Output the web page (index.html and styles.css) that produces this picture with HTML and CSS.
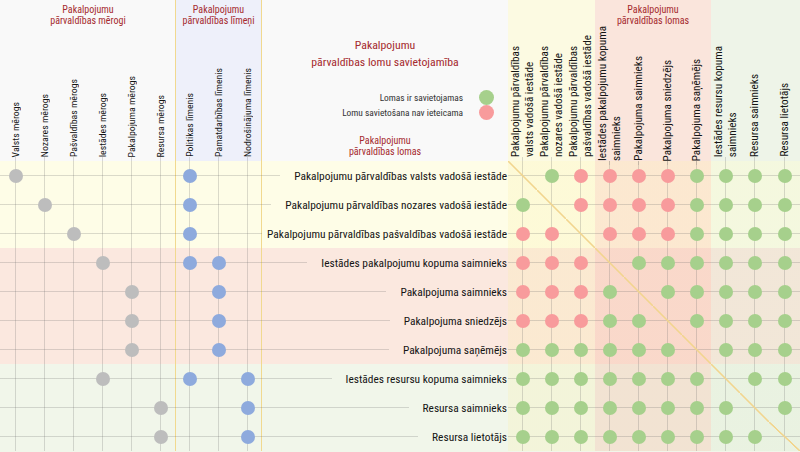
FILE: index.html
```html
<!DOCTYPE html>
<html>
<head>
	<meta charset="utf-8">
	<title>Pakalpojumu pārvaldības lomu savietojamība</title>
	<link rel="stylesheet" href="styles.css">
</head>
<body>
	<!-- header: column titles -->
	<div class="head">
		<div class="grp scales">
			<div class="gt">Pakalpojumu<br>pārvaldības mērogi</div>
			<div class="hl">
				<div class="hc"><span class="vl">Valsts mērogs</span></div>
				<div class="hc"><span class="vl">Nozares mērogs</span></div>
				<div class="hc"><span class="vl">Pašvaldības mērogs</span></div>
				<div class="hc"><span class="vl">Iestādes mērogs</span></div>
				<div class="hc"><span class="vl">Pakalpojuma mērogs</span></div>
				<div class="hc"><span class="vl">Resursa mērogs</span></div>
			</div>
		</div>
		<div class="grp levels">
			<div class="gt">Pakalpojumu<br>pārvaldības līmeņi</div>
			<div class="hl">
				<div class="hc"><span class="vl">Politikas līmenis</span></div>
				<div class="hc"><span class="vl">Pamatdarbības līmenis</span></div>
				<div class="hc"><span class="vl">Nodrošinājuma līmenis</span></div>
			</div>
		</div>
		<div class="mid">
			<div class="title">Pakalpojumu<br>pārvaldības lomu savietojamība</div>
			<div class="legend">
				<div class="li ok">Lomas ir savietojamas</div>
				<div class="li no">Lomu savietošana nav ieteicama</div>
			</div>
			<div class="sub">Pakalpojumu<br>pārvaldības lomas</div>
		</div>
		<div class="grp ry">
			<div class="hl">
				<div class="hc"><span class="vl">Pakalpojumu pārvaldības<br>valsts vadošā iestāde</span></div>
				<div class="hc"><span class="vl">Pakalpojumu pārvaldības<br>nozares vadošā iestāde</span></div>
				<div class="hc"><span class="vl">Pakalpojumu pārvaldības<br>pašvaldības vadošā iestāde</span></div>
			</div>
		</div>
		<div class="grp rp">
			<div class="gt">Pakalpojumu<br>pārvaldības lomas</div>
			<div class="hl">
				<div class="hc"><span class="vl">Iestādes pakalpojumu kopuma<br>saimnieks</span></div>
				<div class="hc"><span class="vl">Pakalpojuma saimnieks</span></div>
				<div class="hc"><span class="vl">Pakalpojuma sniedzējs</span></div>
				<div class="hc"><span class="vl">Pakalpojuma saņēmējs</span></div>
			</div>
		</div>
		<div class="grp rg">
			<div class="hl">
				<div class="hc"><span class="vl">Iestādes resursu kopuma<br>saimnieks</span></div>
				<div class="hc"><span class="vl">Resursa saimnieks</span></div>
				<div class="hc"><span class="vl">Resursa lietotājs</span></div>
			</div>
		</div>
	</div>

	<!-- rows: 9 left cells, label, 10 matrix cells -->
	<div class="band yellow">
		<div class="row">
			<span class="c gy"></span><span class="c"></span><span class="c"></span><span class="c"></span><span class="c"></span><span class="c"></span>
			<span class="c bl"></span><span class="c"></span><span class="c"></span>
			<span class="lbl">Pakalpojumu pārvaldības valsts vadošā iestāde</span>
			<span class="c d"></span><span class="c ok"></span><span class="c no"></span><span class="c no"></span><span class="c no"></span><span class="c no"></span><span class="c ok"></span><span class="c ok"></span><span class="c ok"></span><span class="c ok"></span>
		</div>
		<div class="row">
			<span class="c"></span><span class="c gy"></span><span class="c"></span><span class="c"></span><span class="c"></span><span class="c"></span>
			<span class="c bl"></span><span class="c"></span><span class="c"></span>
			<span class="lbl">Pakalpojumu pārvaldības nozares vadošā iestāde</span>
			<span class="c ok"></span><span class="c d"></span><span class="c no"></span><span class="c no"></span><span class="c no"></span><span class="c no"></span><span class="c ok"></span><span class="c ok"></span><span class="c ok"></span><span class="c ok"></span>
		</div>
		<div class="row">
			<span class="c"></span><span class="c"></span><span class="c gy"></span><span class="c"></span><span class="c"></span><span class="c"></span>
			<span class="c bl"></span><span class="c"></span><span class="c"></span>
			<span class="lbl">Pakalpojumu pārvaldības pašvaldības vadošā iestāde</span>
			<span class="c no"></span><span class="c no"></span><span class="c d"></span><span class="c no"></span><span class="c no"></span><span class="c no"></span><span class="c ok"></span><span class="c ok"></span><span class="c ok"></span><span class="c ok"></span>
		</div>
	</div>
	<div class="band pink">
		<div class="row">
			<span class="c"></span><span class="c"></span><span class="c"></span><span class="c gy"></span><span class="c"></span><span class="c"></span>
			<span class="c bl"></span><span class="c bl"></span><span class="c"></span>
			<span class="lbl">Iestādes pakalpojumu kopuma saimnieks</span>
			<span class="c no"></span><span class="c no"></span><span class="c no"></span><span class="c d"></span><span class="c ok"></span><span class="c ok"></span><span class="c ok"></span><span class="c ok"></span><span class="c ok"></span><span class="c ok"></span>
		</div>
		<div class="row">
			<span class="c"></span><span class="c"></span><span class="c"></span><span class="c"></span><span class="c gy"></span><span class="c"></span>
			<span class="c"></span><span class="c bl"></span><span class="c"></span>
			<span class="lbl">Pakalpojuma saimnieks</span>
			<span class="c no"></span><span class="c no"></span><span class="c no"></span><span class="c ok"></span><span class="c d"></span><span class="c ok"></span><span class="c ok"></span><span class="c ok"></span><span class="c ok"></span><span class="c ok"></span>
		</div>
		<div class="row">
			<span class="c"></span><span class="c"></span><span class="c"></span><span class="c"></span><span class="c gy"></span><span class="c"></span>
			<span class="c"></span><span class="c bl"></span><span class="c"></span>
			<span class="lbl">Pakalpojuma sniedzējs</span>
			<span class="c no"></span><span class="c no"></span><span class="c no"></span><span class="c ok"></span><span class="c ok"></span><span class="c d"></span><span class="c ok"></span><span class="c ok"></span><span class="c ok"></span><span class="c ok"></span>
		</div>
		<div class="row">
			<span class="c"></span><span class="c"></span><span class="c"></span><span class="c"></span><span class="c gy"></span><span class="c"></span>
			<span class="c"></span><span class="c bl"></span><span class="c"></span>
			<span class="lbl">Pakalpojuma saņēmējs</span>
			<span class="c ok"></span><span class="c ok"></span><span class="c ok"></span><span class="c ok"></span><span class="c ok"></span><span class="c ok"></span><span class="c d"></span><span class="c ok"></span><span class="c ok"></span><span class="c ok"></span>
		</div>
	</div>
	<div class="band green">
		<div class="row">
			<span class="c"></span><span class="c"></span><span class="c"></span><span class="c gy"></span><span class="c"></span><span class="c"></span>
			<span class="c bl"></span><span class="c"></span><span class="c bl"></span>
			<span class="lbl">Iestādes resursu kopuma saimnieks</span>
			<span class="c ok"></span><span class="c ok"></span><span class="c ok"></span><span class="c ok"></span><span class="c ok"></span><span class="c ok"></span><span class="c ok"></span><span class="c d"></span><span class="c ok"></span><span class="c ok"></span>
		</div>
		<div class="row">
			<span class="c"></span><span class="c"></span><span class="c"></span><span class="c"></span><span class="c"></span><span class="c gy"></span>
			<span class="c"></span><span class="c"></span><span class="c bl"></span>
			<span class="lbl">Resursa saimnieks</span>
			<span class="c ok"></span><span class="c ok"></span><span class="c ok"></span><span class="c ok"></span><span class="c ok"></span><span class="c ok"></span><span class="c ok"></span><span class="c ok"></span><span class="c d"></span><span class="c ok"></span>
		</div>
		<div class="row">
			<span class="c"></span><span class="c"></span><span class="c"></span><span class="c"></span><span class="c"></span><span class="c gy"></span>
			<span class="c"></span><span class="c"></span><span class="c bl"></span>
			<span class="lbl">Resursa lietotājs</span>
			<span class="c ok"></span><span class="c ok"></span><span class="c ok"></span><span class="c ok"></span><span class="c ok"></span><span class="c ok"></span><span class="c ok"></span><span class="c ok"></span><span class="c ok"></span><span class="c d"></span>
		</div>
	</div>
</body>
</html>
```

FILE: styles.css
```css
:root{
	--line: rgba(100, 100, 100, 0.23);
	--edge-col: #f1d98f;
	--red: #a52a2e;
}
*{
	box-sizing: border-box;
}
body{
	margin: 0;
	width: 800px;
	height: 452px;
	overflow: hidden;
	font-family: Roboto, "Liberation Sans", sans-serif;
	font-stretch: 75%;
	font-weight: 380;
	color: #141414;
	background: #f1f6ea;
}

/* header */
.head{
	display: flex;
	height: 161px;
	padding-left: 1px;
	background: #f9f9f9;
}
.grp{
	display: flex;
	flex-direction: column;
}
.scales{
	width: 174px;
}
.levels{
	width: 87px;
	background: #eef0fa;
	box-shadow: inset 1px 0 var(--edge-col), inset -1px 0 var(--edge-col);
}
.ry{
	width: 87px;
	background: #fcfae2;
}
.rp{
	width: 116px;
	background: #fae5dc;
}
.rg{
	flex: 1;
	background: #eef4e8;
}
.gt{
	padding-top: 5px;
	font-size: 10px;
	line-height: 10.5px;
	color: var(--red);
	text-align: center;
}
.hl{
	flex: 1;
	display: flex;
	align-items: flex-end;
}
.hc{
	width: 29px;
	display: flex;
	justify-content: center;
	padding-bottom: 4px;
	background: linear-gradient(var(--line), var(--line)) center bottom / 1px 4px no-repeat;
}
.rg .hc:last-child{
	flex: 1;
}
.vl{
	writing-mode: vertical-rl;
	transform: rotate(180deg);
	white-space: nowrap;
	font-size: 9.8px;
	line-height: 12px;
}
.ry .vl, .rp .vl, .rg .vl{
	font-size: 11.2px;
	line-height: 14px;
}

/* middle of header: title and legend */
.mid{
	width: 246px;
	display: flex;
	flex-direction: column;
	align-items: center;
	padding-top: 37px;
}
.title{
	font-size: 11.8px;
	line-height: 17px;
	color: var(--red);
	text-align: center;
}
.legend{
	align-self: stretch;
	margin-top: 19px;
	padding-right: 14px;
}
.li{
	display: flex;
	justify-content: flex-end;
	align-items: center;
	gap: 16px;
	height: 15px;
	font-size: 9.4px;
	color: #333;
}
.li::after{
	content: '';
	width: 15px;
	height: 15px;
	border-radius: 50%;
}
.sub{
	margin-top: auto;
	margin-bottom: 4px;
	font-size: 10px;
	line-height: 11px;
	color: var(--red);
	text-align: center;
}

/* rows */
.band.yellow{
	background: #fefde7;
}
.band.pink{
	background: #fbe8df;
}
.band.green{
	background: #f1f6ea;
}
.row{
	display: grid;
	grid-template-columns: repeat(9, 29px) 246px repeat(9, 29px) 1fr;
	height: 29px;
	padding-left: 1px;
	background: linear-gradient(var(--line), var(--line)) left center / 1px 1px no-repeat;
}
.c{
	--diag: none;
	--edge: none;
	--tint: transparent;
	display: grid;
	place-items: center;
	background:
		var(--diag),
		linear-gradient(var(--line), var(--line)) center / 1px 100% no-repeat,
		linear-gradient(var(--line), var(--line)) center / 100% 1px no-repeat,
		var(--edge),
		linear-gradient(var(--tint), var(--tint));
}
.row > :nth-child(7){
	--edge: linear-gradient(var(--edge-col), var(--edge-col)) left / 1px 100% no-repeat;
}
.row > :nth-child(9){
	--edge: linear-gradient(var(--edge-col), var(--edge-col)) right / 1px 100% no-repeat;
}
.row > :nth-child(n+11):nth-child(-n+13){
	--tint: rgba(250, 238, 160, 0.22);
}
.row > :nth-child(n+14):nth-child(-n+17){
	--tint: rgba(245, 170, 140, 0.25);
}
.row > :nth-child(n+18){
	--tint: rgba(200, 225, 185, 0.18);
}
.c.d{
	--diag: linear-gradient(to top right, transparent calc(50% - 1px), #f2d58e calc(50% - 0.5px), #f2d58e calc(50% + 0.5px), transparent calc(50% + 1px));
}
.gy::after, .bl::after, .c.ok::after, .c.no::after{
	content: '';
	width: 14px;
	height: 14px;
	border-radius: 50%;
}
.gy::after{
	background: #bdbdbd;
}
.bl::after{
	background: #8eaadd;
}
.ok::after{
	background: #a6d08c;
}
.no::after{
	background: #f89b9c;
}
.lbl{
	display: flex;
	align-items: center;
	justify-content: flex-end;
	white-space: nowrap;
	font-size: 11.4px;
	padding-right: 1px;
}
.lbl::before{
	content: '';
	flex: 1;
	height: 1px;
	background: var(--line);
	margin-right: 14px;
}
```
